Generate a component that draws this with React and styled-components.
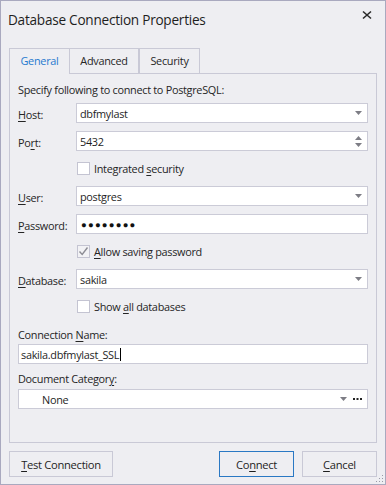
import React from "react";
import styled, { createGlobalStyle, css } from "styled-components";

const Global = createGlobalStyle`
  html, body { margin: 0; padding: 0; background: #eeeef2; }
  * { box-sizing: border-box; }
`;

const FONT = `"Open Sans", "Noto Sans", "Liberation Sans", sans-serif`;

const Window = styled.div`
  position: relative;
  width: 386px;
  height: 485px;
  border: 1px solid #a9a9bf;
  background: #eeeef2;
  display: flex;
  flex-direction: column;
  font-family: ${FONT};
  font-size: 10.9px;
  letter-spacing: -0.3px;
  color: #252525;
`;

const TitleBar = styled.div`
  height: 47px;
  display: flex;
  justify-content: space-between;
  align-items: flex-start;
  padding: 0 13px 0 7px;
`;

const Title = styled.div`
  margin-top: 9px;
  font-size: 13.6px;
  letter-spacing: -0.25px;
  line-height: 20px;
  color: #1e1e1e;
`;

const CloseBtn = styled.div`
  margin-top: 9px;
  width: 10px;
  height: 10px;
  display: flex;
`;

const TabStrip = styled.div`
  display: flex;
  height: 25px;
  padding-left: 8px;
`;

const Tab = styled.div`
  position: relative;
  height: 25px;
  width: ${(p) => p.$w}px;
  margin-left: ${(p) => p.$ml || 0}px;
  border: 1px solid #c9c9d6;
  border-bottom: none;
  background: #eeeef2;
  display: flex;
  align-items: center;
  justify-content: center;
  padding-bottom: 1px;
  color: #262626;
  ${(p) =>
    p.$active &&
    css`
      height: 26px;
      margin-bottom: -1px;
      z-index: 1;
      color: #2679cf;
      padding-bottom: 2px;
    `}
`;

const Panel = styled.div`
  height: 370px;
  margin: 0 8px;
  border: 1px solid #c9c9d6;
  padding: 0 8px;
  display: flex;
  flex-direction: column;
`;

const Intro = styled.div`
  margin-top: 8px;
  line-height: 15px;
`;

const Row = styled.div`
  display: flex;
  align-items: center;
  height: 20px;
  margin-top: ${(p) => p.$mt}px;
`;

const Label = styled.div`
  width: 58px;
  flex: none;
  line-height: 15px;
  padding-top: 2px;
`;

const U = styled.span`
  text-decoration: underline;
  text-underline-offset: 2px;
`;

const Field = styled.div`
  flex: 1;
  height: 20px;
  background: #ffffff;
  border: 1px solid #cbcbd7;
  display: flex;
  align-items: center;
  padding-left: ${(p) => p.$pl ?? 3}px;
  padding-right: 5px;
  line-height: 15px;
  color: #1e1e1e;
`;

const FieldText = styled.span`
  flex: 1;
  padding-top: 1px;
  white-space: nowrap;
`;

const Caret = styled.span`
  display: inline-block;
  width: 1px;
  height: 13px;
  background: #000;
  vertical-align: -2px;
  margin-left: 1px;
`;

const Dots = styled.span`
  flex: 1;
  font-size: 9.5px;
  letter-spacing: 1.2px;
  color: #111;
  padding-left: 1px;
`;

const ArrowBox = styled.div`
  display: flex;
  flex-direction: column;
  gap: 3px;
  align-items: center;
`;

const CheckRow = styled.div`
  display: flex;
  align-items: center;
  height: 20px;
  margin-top: ${(p) => p.$mt}px;
  padding-left: 59px;
  gap: 4px;
`;

const Box = styled.div`
  width: 13px;
  height: 13px;
  border: 1px solid #c4c4d2;
  background: ${(p) => (p.$checked ? "#f2f2f5" : "#ffffff")};
  display: flex;
  align-items: center;
  justify-content: center;
`;

const CheckText = styled.span`
  line-height: 15px;
  padding-top: 1px;
`;

const BlockLabel = styled.div`
  margin-top: ${(p) => p.$mt}px;
  line-height: 15px;
`;

const FullField = styled(Field)`
  flex: none;
  height: 20px;
  margin-top: ${(p) => p.$mt}px;
`;

const Ellipsis = styled.svg`
  margin-left: 6px;
`;

const Footer = styled.div`
  display: flex;
  height: 26px;
  margin-top: 8px;
  padding: 0 8px;
  gap: 8px;
`;

const Button = styled.div`
  width: ${(p) => p.$w}px;
  height: 26px;
  border: 1px solid ${(p) => (p.$primary ? "#2a78c4" : "#c9c9d6")};
  display: flex;
  align-items: center;
  justify-content: center;
  padding-top: 1px;
  font-size: 11.2px;
  color: #1e1e1e;
`;

const Spacer = styled.div`
  flex: 1;
`;

const Grip = styled.svg`
  position: absolute;
  right: 1px;
  bottom: 1px;
`;

const DownArrow = () => (
  <svg width="7" height="4" viewBox="0 0 7 4">
    <path d="M0 0H7L3.5 4Z" fill="#7d7d85" />
  </svg>
);
const UpArrow = () => (
  <svg width="7" height="4" viewBox="0 0 7 4">
    <path d="M0 4H7L3.5 0Z" fill="#7d7d85" />
  </svg>
);

const CheckMark = () => (
  <svg width="11" height="11" viewBox="0 0 11 11">
    <path d="M1.5 5.5L4.2 8.5L9.5 1.5" fill="none" stroke="#8c8c94" strokeWidth="1.4" />
  </svg>
);

export default function App() {
  return (
    <>
      <Global />
      <Window>
        <TitleBar>
          <Title>Database Connection Properties</Title>
          <CloseBtn>
            <svg width="10" height="10" viewBox="0 0 10 10">
              <path d="M1 1.5L9 8.5M9 1.5L1 8.5" stroke="#2a2a2a" strokeWidth="1.6" />
            </svg>
          </CloseBtn>
        </TitleBar>
        <TabStrip>
          <Tab $w={61} $active>General</Tab>
          <Tab $w={70} $ml={-1}>Advanced</Tab>
          <Tab $w={61}>Security</Tab>
        </TabStrip>
        <Panel>
          <Intro>Specify following to connect to PostgreSQL:</Intro>
          <Row $mt={6}>
            <Label><U>H</U>ost:</Label>
            <Field>
              <FieldText>dbfmylast</FieldText>
              <DownArrow />
            </Field>
          </Row>
          <Row $mt={8}>
            <Label>Po<U>r</U>t:</Label>
            <Field>
              <FieldText>5432</FieldText>
              <ArrowBox>
                <UpArrow />
                <DownArrow />
              </ArrowBox>
            </Field>
          </Row>
          <CheckRow $mt={7}>
            <Box />
            <CheckText>Integrated <U>s</U>ecurity</CheckText>
          </CheckRow>
          <Row $mt={8}>
            <Label><U>U</U>ser:</Label>
            <Field>
              <FieldText>postgres</FieldText>
              <DownArrow />
            </Field>
          </Row>
          <Row $mt={8}>
            <Label><U>P</U>assword:</Label>
            <Field>
              <Dots>●●●●●●●●</Dots>
            </Field>
          </Row>
          <CheckRow $mt={7}>
            <Box $checked>
              <CheckMark />
            </Box>
            <CheckText><U>A</U>llow saving password</CheckText>
          </CheckRow>
          <Row $mt={8}>
            <Label><U>D</U>atabase:</Label>
            <Field>
              <FieldText>sakila</FieldText>
              <DownArrow />
            </Field>
          </Row>
          <CheckRow $mt={7}>
            <Box />
            <CheckText>Show <U>a</U>ll databases</CheckText>
          </CheckRow>
          <BlockLabel $mt={11}>Connection <U>N</U>ame:</BlockLabel>
          <FullField $mt={2} $pl={2}>
            <FieldText>
              sakila.dbfmylast_SSL
              <Caret />
            </FieldText>
          </FullField>
          <BlockLabel $mt={7}>Document Categor<U>y</U>:</BlockLabel>
          <FullField $mt={3} $pl={23}>
            <FieldText>None</FieldText>
            <DownArrow />
            <Ellipsis width="9" height="2" viewBox="0 0 9 2">
              <g fill="#222">
                <rect x="0" y="0" width="2" height="2" />
                <rect x="3.5" y="0" width="2" height="2" />
                <rect x="7" y="0" width="2" height="2" />
              </g>
            </Ellipsis>
          </FullField>
        </Panel>
        <Footer>
          <Button $w={104}><span><U>T</U>est Connection</span></Button>
          <Spacer />
          <Button $w={75} $primary><span>Co<U>n</U>nect</span></Button>
          <Button $w={75}><span><U>C</U>ancel</span></Button>
        </Footer>
        <Grip width="8" height="8" viewBox="0 0 8 8">
          <g fill="#9a9aa8">
            <rect x="6" y="0" width="1" height="1" />
            <rect x="3" y="3" width="1" height="1" />
            <rect x="6" y="3" width="1" height="1" />
            <rect x="0" y="6" width="1" height="1" />
            <rect x="3" y="6" width="1" height="1" />
            <rect x="6" y="6" width="1" height="1" />
          </g>
        </Grip>
      </Window>
    </>
  );
}
